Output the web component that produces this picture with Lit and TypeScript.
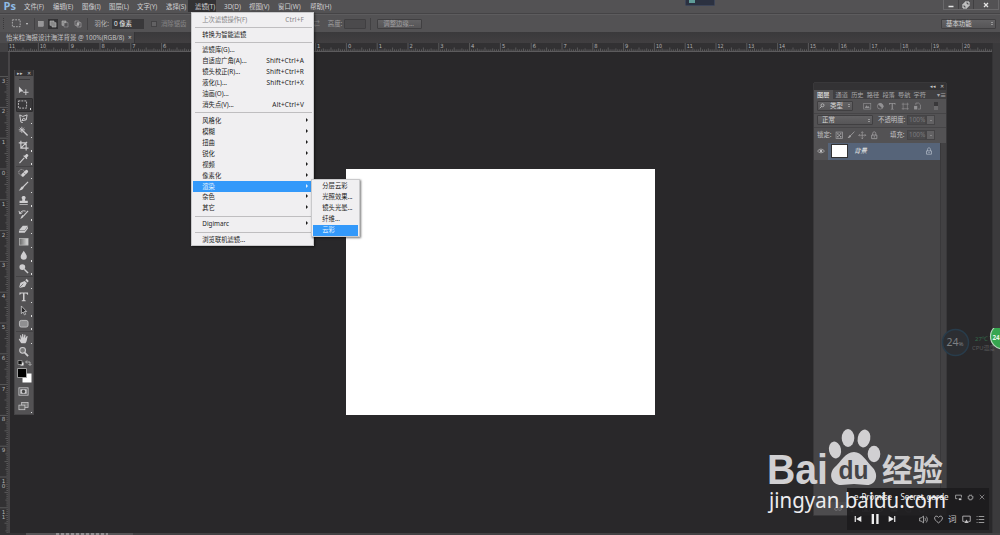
import { LitElement, html, svg, css } from "lit";
import { customElement, property } from "lit/decorators.js";

const UNIT = 30.8;

const ICONS: Record<string, unknown> = {
  move: svg`<path fill="currentColor" d="M1 1.5v7l2-1.8h3z"/><path stroke="currentColor" fill="none" d="M8.2 4.5v6M5.5 7.6h5.5"/>`,
  marquee: svg`<rect x="1.5" y="2" width="8.5" height="7.5" fill="none" stroke="currentColor" stroke-width=".9" stroke-dasharray="2 1.1"/>`,
  lasso: svg`<path fill="none" stroke="currentColor" d="M3 9.5 1.8 2 5 3.6 9.5 2 8.6 7.2 4 8 5.5 5.5 8 6.5M3 9.5l2 .5"/>`,
  wand: svg`<path stroke="currentColor" stroke-width="1.5" d="m5 5 5 5"/><path stroke="currentColor" stroke-width=".9" d="M4 .8v6.4M.8 4h6.4M1.8 1.8l4.4 4.4M6.2 1.8 1.8 6.2"/>`,
  crop: svg`<path fill="none" stroke="currentColor" stroke-width="1.2" d="M3 .8v7.7h8M.8 3h7.7v8M3 8.5 9.5 2"/>`,
  eyedrop: svg`<path stroke="currentColor" stroke-width="1.2" fill="none" d="M1.5 10.5 6.5 5"/><path fill="currentColor" d="m5.5 3 3.5 3.5.8-1-.6-.8 1.5-1.7c.5-1.1-.9-2.4-2-1.9L7 2.8l-.7-.5z"/>`,
  heal: svg`<path stroke="currentColor" stroke-width="3.2" stroke-linecap="round" d="M5 7.5 9 3.6"/><circle cx="3.8" cy="4.5" r="3" fill="none" stroke="currentColor" stroke-width=".7" stroke-dasharray="1.2 .7"/><path stroke="#535254" stroke-width=".6" d="m6 4.8 2 2"/>`,
  brush: svg`<path stroke="currentColor" stroke-width="1.2" d="M10.5 1 5 6.5"/><path fill="currentColor" d="M5.8 6.2C5.8 9 3 9.8.8 9.8c1.7-.7 1.6-3 3.3-4z"/>`,
  stamp: svg`<path fill="currentColor" d="M4.4 6c.5-1.7-.6-2-.6-3.2C3.8.4 8 .4 8 2.8 8 4 7 4.3 7.4 6h2.8v2.4H1.6V6zM1.6 9.3h8.6v1H1.6z"/>`,
  history: svg`<path stroke="currentColor" stroke-width="1.2" d="M10.5 2 6 7"/><path fill="currentColor" d="M6.3 6.5C6 9 4 10 2 10c1.5-.8 1-2.5 2.8-3.8z"/><path fill="none" stroke="currentColor" d="M2 5c.5-2.5 3-3.7 6-2.8M1 2l1 3.2 2.6-1.4"/>`,
  eraser: svg`<path fill="currentColor" d="M1 7.5 5 2.8h5.4L7 7.5zM1 8.2h6l3.4-4.6v2.2L7 10.3H1z"/>`,
  gradient: svg`<defs><linearGradient id="g"><stop stop-color="#666"/><stop offset="1" stop-color="#ddd"/></linearGradient></defs><rect x="1.5" y="2.5" width="9" height="7" fill="url(#g)" stroke="#b5b5b5" stroke-width=".8"/>`,
  blur: svg`<path fill="currentColor" d="M6 .8c1 2 3.2 4 3.2 6.2a3.2 3.2 0 0 1-6.4 0C2.8 4.800 5 2.800 6 .8z"/>`,
  dodge: svg`<circle cx="4.500" cy="4.300" r="3" fill="currentColor"/><path stroke="currentColor" stroke-width="1.500" d="m6.500 6.500 4 4"/>`,
  pen: svg`<path fill="currentColor" d="M1 10.500 2.500 5 7 3l2.200 2.200L7.200 9zM7.600 2.300 9 .8l2.200 2.200L10 4.600z"/><path stroke="#535254" stroke-width=".7" d="M1 10.500 5.500 6"/>`,
  type: svg`<path fill="currentColor" d="M1.500 1.500h9v2.300h-.8c-.2-1-.5-1.300-2.900-1.300v7l1.300.5v.6H3.900V10l1.300-.5v-7C2.800 2.500 2.500 2.800 2.300 3.800h-.8z"/>`,
  select: svg`<path fill="#29282a" stroke="currentColor" stroke-width=".8" d="M3.500 1v8l1.900-1.700 1.300 3 1.300-.6-1.300-2.900H9z"/>`,
  shape: svg`<rect x="1.500" y="2.500" width="9" height="7" rx="2" fill="#8f8f91" stroke="currentColor" stroke-width=".8"/>`,
  hand: svg`<path fill="currentColor" d="M3.500 10.800C2.500 9 1 7.500.8 6.200c.8-.4 1.600.2 2.200 1L2.200 2.800c.2-.7 1-.6 1.200 0l.8 2.500L4.300 1.500c.3-.7 1-.6 1.200 0l.3 3.600.9-3.300c.3-.6 1.100-.4 1.200.2L7.500 5.500 9 3.300c.5-.5 1.200 0 1 .7C9.200 6.300 9.500 9 7.800 10.800z"/>`,
  zoom: svg`<circle cx="4.800" cy="4.500" r="3" fill="#777" stroke="currentColor" stroke-width="1.100"/><path stroke="currentColor" stroke-width="1.800" d="m7 7 3.500 3.500"/>`,
  mask: svg`<rect x="1" y="2" width="10" height="8" fill="none" stroke="currentColor" stroke-width=".9"/><path fill="currentColor" d="M2.500 3.500h7v5h-7z"/><circle cx="6" cy="6" r="1.800" fill="#444"/>`,
  screen: svg`<rect x="4" y="1.500" width="7" height="5.500" fill="#777" stroke="currentColor" stroke-width=".8"/><rect x="1" y="4.500" width="6.500" height="5" fill="#666" stroke="currentColor" stroke-width=".8"/>`,
  solid: svg`<rect x="2" y="2" width="7.500" height="7.500" fill="#989799" stroke="#bbb" stroke-width=".6"/>`,
  union: svg`<path fill="#888" stroke="currentColor" stroke-width=".9" d="M1.500 1.500h6v2.500h3v6.500h-6V8h-3z"/>`,
  minus: svg`<path fill="#888" stroke="currentColor" stroke-width=".9" d="M1.500 1.500h6V4h-3v4h-3z"/><path fill="none" stroke="currentColor" stroke-width=".6" d="M7.500 4h3v6.500h-6V8"/>`,
  cross: svg`<path fill="none" stroke="currentColor" stroke-width=".8" d="M1.500 1.500h6v6.500h-6zM4.500 4h6v6.500h-6z"/><path fill="#aaa" d="M4.500 4h3v4h-3z"/>`,
  image: svg`<rect x="1" y="2" width="10" height="8" fill="none" stroke="currentColor" stroke-width=".9"/><path fill="currentColor" d="m2.500 8.500 2.300-4 1.700 2.200 1-1.200 2 3z"/>`,
  adjust: svg`<circle cx="6" cy="6" r="4" fill="none" stroke="currentColor"/><path fill="currentColor" d="M3 3a4.200 4.200 0 0 1 6 6z"/>`,
  frame: svg`<path fill="none" stroke="currentColor" stroke-width=".9" d="M3 1v10M9 1v10M1 3h10M1 9.500h10"/>`,
  smart: svg`<path fill="none" stroke="currentColor" d="M4 4V1.500h4l2.500 2.500v6H7"/><path fill="currentColor" d="M1.500 5.500H6v5H1.500z"/>`,
  checker: svg`<rect x="1.500" y="1.500" width="9" height="9" fill="none" stroke="currentColor"/><path fill="currentColor" d="M3 3h2v2H3zM7 3h2v2H7zM5 5h2v2H5zM3 7h2v2H3zM7 7h2v2H7z"/>`,
  arrows: svg`<path fill="none" stroke="currentColor" stroke-width=".9" d="M6 1v10M1 6h10M4.500 2.500 6 1l1.500 1.500M4.500 9.500 6 11l1.500-1.500M2.500 4.500 1 6l1.500 1.500M9.500 4.500 11 6 9.500 7.500"/>`,
  lock: svg`<path fill="none" stroke="currentColor" stroke-width="1.100" d="M3.800 6V3.500c0-3 4.400-3 4.400 0V6M2.300 5.800h7.400v5H2.300z"/><path fill="currentColor" d="M5.300 7.500h1.400V9H5.300z"/>`,
  eye: svg`<path fill="none" stroke="currentColor" d="M.8 6.200C3 2.200 9 2.200 11.200 6.200 9 9.500 3 9.500.8 6.200z"/><circle cx="6" cy="6" r="2" fill="currentColor"/>`,
  search: svg`<circle cx="7" cy="4.500" r="3" fill="none" stroke="currentColor" stroke-width="1.300"/><path stroke="currentColor" stroke-width="1.500" d="M4.800 6.800 1.500 10.500"/>`,
  prev: svg`<path fill="currentColor" d="M1 1.500h1.800v9H1zM11 1.500v9L3.200 6z"/>`,
  next: svg`<path fill="currentColor" d="M9.200 1.500H11v9H9.200zM1 1.500v9L8.800 6z"/>`,
  pause: svg`<path fill="currentColor" d="M2 0h2.800v12H2zM7.500 0h2.800v12H7.500z"/>`,
  volume: svg`<path fill="none" stroke="currentColor" d="M.8 4h2L6 1.500v9L2.800 8h-2zM7.800 3.800c1 1.400 1 3 0 4.400M9.600 2c2 2.400 2 5.600 0 8"/>`,
  heart: svg`<path fill="none" stroke="currentColor" stroke-width="1.100" d="M6 10.500C2.500 8 .8 6 .8 4 .8 1 4.500.8 6 3.200 7.500.8 11.200 1 11.200 4c0 2-1.700 4-5.200 6.500z"/>`,
  cast: svg`<path fill="none" stroke="currentColor" stroke-width="1.100" d="M3.500 8.500H1V1.500h10v7H8.500"/><path fill="currentColor" d="m6 6 3 4.500H3z"/>`,
  list: svg`<path stroke="currentColor" d="M3.500 2H11M3.500 6H11M3.500 10H11M.8 2h1.300M.8 6h1.300M.8 10h1.300"/>`,
  mini: svg`<path fill="none" stroke="currentColor" stroke-width="1.200" d="M4 8H1V2h10v4"/><path fill="currentColor" d="M6.500 7.500h4.500v3H6.500z"/>`,
  gear: svg`<circle cx="6" cy="6" r="3.600" fill="none" stroke="currentColor" stroke-width="1.200"/><circle cx="6" cy="6" r="4.800" fill="none" stroke="currentColor" stroke-width=".9" stroke-dasharray="1.600 2.170"/>`,
  close: svg`<path stroke="currentColor" stroke-width="1.100" d="m1.500 1.500 9 9M10.500 1.500l-9 9"/>`,
  link: svg`<path fill="none" stroke="currentColor" d="M5 4H3a2 2 0 0 0 0 4h2M7 4h2a2 2 0 0 1 0 4H7M4 6h4"/>`,
  folder: svg`<path fill="currentColor" d="M1 2.500h4l1 1.200h5v6H1z"/>`,
  page: svg`<path fill="none" stroke="currentColor" d="M2 1.500h8v9H5l-3-3z"/>`,
  trash: svg`<path fill="none" stroke="currentColor" d="M2 3h8M3 3v7.500h6V3M5 1.500h2"/>`,
};

const icon = (name: string, size = 10) =>
  html`<svg class="ico" width=${size} height=${size} viewBox="0 0 12 12">${ICONS[name]}</svg>`;

@customElement("ps-ruler")
class PsRuler extends LitElement {
  @property({ type: Boolean }) vertical = false;

  static styles = css`
    :host { display: block; background: #323133; }
    svg { display: block; }
    text { font: 5.6px "DejaVu Sans", sans-serif; fill: #b3b2b4; }
  `;

  render() {
    const v = this.vertical;
    const origin = v ? 117 : 338.4;
    const len = v ? 482 : 984;
    const first = v ? -3 : -10.99;
    const ticks: string[] = [];
    for (let i = Math.ceil(first * 16); ; i++) {
      const p = origin + (i * UNIT) / 16;
      if (p > len) break;
      if (p < 0) continue;
      const h = i % 16 === 0 ? 8 : i % 8 === 0 ? 3.5 : i % 4 === 0 ? 2.6 : 1.6;
      ticks.push(v ? `M8 ${p.toFixed(1)}h${-h}` : `M${p.toFixed(1)} 8v${-h}`);
    }
    const labels: { n: number; p: number }[] = [];
    for (let n = v ? -3 : -11; origin + n * UNIT < len; n++) labels.push({ n: Math.abs(n), p: origin + n * UNIT });
    return html`<svg width=${v ? 10 : len} height=${v ? len : 9}>
      <path d=${ticks.join("")} stroke="#6b6a6c" stroke-width=".7" fill="none"/>
      ${labels.map(({ n, p }) =>
        v
          ? String(n).split("").map((d, k) => svg`<text x="1.800" y=${p + 6 + k * 5}>${d}</text>`)
          : svg`<text x=${p + 1.5} y="5.200" textLength=${n > 9 ? 6 : 3.3} lengthAdjust="spacingAndGlyphs">${n}</text>`
      )}
      ${v ? svg`<path d="M9 0V482" stroke="#5c5b5d"/>` : svg`<path d="M0 8.500H984" stroke="#5c5b5d"/>`}
    </svg>`;
  }
}

@customElement("ps-menu")
class PsMenu extends LitElement {
  @property({ attribute: false }) items: any[] = [];

  static styles = css`
    :host { display: block; box-sizing: border-box; background: #f0eff1; color: #1c1c1c; border: 1px solid #c9c9cb; box-shadow: 1px 1px 2px #0008; font: 6.3px "Noto Sans", "Noto Sans CJK SC", sans-serif; }
    .row { display: flex; align-items: center; height: 10.95px; padding: 0 8px 0 9.3px; margin: 0 1px; white-space: nowrap; line-height: 10px; }
    .row.off { color: #858486; }
    .row.on { background: #3399fa; color: #e4f2ff; padding-right: 4px; }
    .row.sub { padding-right: 4px; }
    .name { flex: 1; }
    .key { letter-spacing: .13px; font-size: 6.5px; }
    .sep { height: 1px; margin: 2px 1px 2px 3px; background: #bfbec0; }
    .sep.tight { margin: 1.7px 1px 1.7px 3px; }
    .arrow { border-left: 2.5px solid currentColor; border-top: 2px solid transparent; border-bottom: 2px solid transparent; margin-bottom: 2px; }
  `;

  render() {
    return this.items.map((i, n) =>
      i === null
        ? html`<div class="sep ${n < 4 ? "tight" : ""}"></div>`
        : html`<div class="row ${i.state ?? ""} ${i.sub ? "sub" : ""}"><span class="name">${i.name}</span>${
            i.key ? html`<span class="key">${i.key}</span>` : ""
          }${i.sub ? html`<span class="arrow"></span>` : ""}</div>`
    );
  }
}

const FILTER_MENU = [
  { name: "上次滤镜操作(F)", key: "Ctrl+F", state: "off" },
  null,
  { name: "转换为智能滤镜" },
  null,
  { name: "滤镜库(G)..." },
  { name: "自适应广角(A)...", key: "Shift+Ctrl+A" },
  { name: "镜头校正(R)...", key: "Shift+Ctrl+R" },
  { name: "液化(L)...", key: "Shift+Ctrl+X" },
  { name: "油画(O)..." },
  { name: "消失点(V)...", key: "Alt+Ctrl+V" },
  null,
  ...["风格化", "模糊", "扭曲", "锐化", "视频", "像素化"].map((name) => ({ name, sub: true })),
  { name: "渲染", sub: true, state: "on" },
  { name: "杂色", sub: true },
  { name: "其它", sub: true },
  null,
  { name: "Digimarc", sub: true },
  null,
  { name: "浏览联机滤镜..." },
];
const RENDER_MENU = [
  { name: "分层云彩" },
  { name: "光照效果..." },
  { name: "镜头光晕..." },
  { name: "纤维..." },
  { name: "云彩", state: "on" },
];
const MENUS = ["文件(F)", "编辑(E)", "图像(I)", "图层(L)", "文字(Y)", "选择(S)", "滤镜(T)", "3D(D)", "视图(V)", "窗口(W)", "帮助(H)"];
const TOOLS = ["move", "marquee", "lasso", "wand", "crop", "eyedrop", "heal", "brush", "stamp", "history", "eraser", "gradient", "blur", "dodge", "pen", "type", "select", "shape", "hand", "zoom"];

@customElement("app-root")
class AppRoot extends LitElement {
  static styles = css`
    :host { display: block; position: relative; width: 1000px; height: 535px; overflow: hidden; background: #29282a; color: #d2d1d3; font: 6.4px "Noto Sans", "Noto Sans CJK SC", sans-serif; line-height: 10px; white-space: nowrap; }
    * { box-sizing: border-box; }
    .ico { display: block; flex: none; }
    .frame { display: flex; flex-direction: column; height: 535px; }
    .menubar { display: flex; height: 14px; background: #535254; border-bottom: 1px solid #454446; }
    .logo { width: 20px; padding: 0 0 0 3.500px; font: bold 11px/12px "Open Sans", sans-serif; color: #8fbbe4; }
    .menus { display: grid; grid-template-columns: 29px 29px 27px 28px 29px 29px 29px 25px 29px 32px 30px; flex: 1; }
    .menus span { height: 12px; line-height: 12px; padding: 1px 0 0 4px; }
    .menus .active { background: #333234; margin-right: 4px; }
    .menus .active { margin-left: -3px; padding-left: 7px; }
    .window { display: flex; height: 10px; margin-right: 1px; border: 1px solid #69686a; border-top: 0; color: #e4e4e4; }
    .window span { width: 15px; display: grid; place-items: center; border-right: 1px solid #403f41; }
    .window span:last-child { width: 24px; border: 0; }
    .options { display: flex; align-items: center; height: 18px; background: #535254; border-top: 1px solid #5d5c5e; color: #b9b8ba; }
    .grip { width: 1px; height: 11px; margin-left: 3px; border-left: 1px dotted #39383a; }
    .options .marq { margin-left: 7px; }
    .caret { border-top: 2px solid #d4d4d4; border-left: 1.500px solid transparent; border-right: 1.500px solid transparent; margin-left: 4px; }
    .rule { width: 1px; height: 12px; background: #424143; }
    .modes { display: flex; gap: 2.800px; margin-left: 1px; }
    .modes div { height: 10px; display: grid; place-items: center; width: 9.500px; }
    .modes .on { background: #333234; }
    .field { width: 32px; height: 10px; margin-left: 3px; padding-left: 2px; background: #39383a; color: #efefef; }
    .box { width: 6px; height: 6px; margin-left: 7px; background: #626163; border: 1px solid #444345; }
    .dim { color: #858486; }
    .btn { height: 10px; background: linear-gradient(#636264, #565557); border: 1px solid #403f41; line-height: 8px; border-radius: 1px; }
    .tabs { display: flex; height: 11px; background: linear-gradient(#3a393b, #413f41); }
    .tab { width: 135px; background: #4c4b4d; color: #c3c2c4; padding: 1px 0 0 6px; border-right: 1px solid #353436; display: flex; }
    .body { display: grid; grid-template-columns: 10px 982px 8px; flex: 1; min-height: 0; }
    .hruler { display: grid; grid-template-columns: 8px 984px 8px; height: 9px; }
    .corner { background: #434244; }
    .scroll { background: #3b3a3c; border-left: 1px solid #343335; }
    .status { height: 2px; background: linear-gradient(90deg, #343335 26px, #555456 26px 133px, #424143 133px); padding-left: 56px; }
    .status div { width: 52px; height: 2px; background: repeating-linear-gradient(90deg, #8f8e90 0 3px, #5a595b 3px 5px); }
    .document { position: absolute; left: 346px; top: 169px; width: 308.500px; height: 246px; background: #fff; }
    .filter { position: absolute; left: 191px; top: 12px; width: 123px; height: 234px; padding-top: 1.200px; }
    .render { position: absolute; left: 311px; top: 179px; width: 49px; height: 58px; padding-top: .9px; }

    .toolbox { position: absolute; left: 14px; top: 70px; width: 20px; height: 345px; background: #535254; border: 1px solid #454446; border-top: 0; color: #cfced0; display: flex; flex-direction: column; align-items: center; }
    .head { align-self: stretch; height: 6px; background: #333234; color: #ccc; display: flex; justify-content: flex-end; align-items: center; gap: 4px; padding-right: 2px; font-size: 5px; line-height: 5px; flex: none; }
    .handle { width: 11px; height: 1px; background: #39383a; margin: 3px 0 4px; flex: none; }
    .tool { height: 13.750px; width: 17px; display: grid; grid-template-columns: 12.500px 2px; justify-content: end; align-items: center; flex: none; }
    .tool.on { background: #39383a; border: 1px solid #2e2d2f; border-radius: 1px; }
    .tool i { width: 1.300px; height: 1.300px; background: #ddd; align-self: end; margin-bottom: 1px; }
    .ends { border-bottom: 1px solid #444345; }
    .low { height: 15px; }

    .panel { position: absolute; left: 813px; top: 82px; width: 134px; height: 434px; background: #535254; border: 1px solid #39383a; border-radius: 2px 2px 0 0; display: flex; flex-direction: column; }
    .panel .head { height: 7px; }
    .ptabs { display: flex; height: 9px; background: #403f41; color: #a7a6a8; font-size: 6.200px; line-height: 9px; gap: 3.100px; }
    .ptabs span { width: 12.500px; }
    .ptabs .cur { width: 18.500px; background: #535254; color: #f0f0f0; padding-left: 3px; }
    .ptabs .more { margin-left: auto; width: 9px; }
    .prow { display: flex; align-items: center; height: 14.500px; padding: 0 3px; border-bottom: 1px solid #464547; color: #c4c3c5; flex: none; }
    .sel { display: flex; align-items: center; justify-content: space-between; padding: 0 2px 0 4px; color: #d4d4d4; }
    .updown { display: flex; flex-direction: column; gap: 1px; }
    .updown::before, .updown::after { content: ""; border: 1.500px solid transparent; border-top: 0; border-bottom: 1.800px solid #d2d2d2; }
    .updown::after { border-bottom: 0; border-top: 1.800px solid #d2d2d2; }
    .pct { height: 10px; width: 19px; background: #4b4a4c; border: 1px solid #454446; color: #7b7a7c; line-height: 8px; padding-left: 1px; }
    .drop { height: 10px; width: 9px; display: grid; place-items: center; background: #626163; border: 1px solid #454446; }
    .drop::after { content: ""; border-top: 1.800px solid #aaa; border-left: 1.500px solid transparent; border-right: 1.500px solid transparent; }
    .filters { display: flex; gap: 4px; margin-left: 10px; color: #929193; }
    .layers { flex: 1; display: grid; grid-template-columns: 126px 1fr; background: #464547; }
    .layer { height: 17px; display: flex; align-items: center; background: #535254; color: #e4e4e4; }
    .layer .vis { width: 14px; padding-left: 3px; color: #bdbcbe; }
    .layer .bar { flex: 1; height: 17px; background: #566479; display: flex; align-items: center; padding: 0 7px 0 3px; font-style: italic; }
    .bar .ico { color: #b4bcc8; }
    .thumb { width: 17px; height: 14px; background: #fff; border: 1px solid #333; margin-right: 6px; }
    .track { border-left: 1px solid #39383a; background: #424143; }
    .foot { height: 13px; display: flex; justify-content: center; align-items: center; gap: 6px; background: #4d4c4e; color: #858486; }

    .gauge { position: absolute; left: 941px; top: 328px; }
    .widget { position: absolute; left: 685px; top: 0; width: 30px; height: 6px; background: #2b3140; border: 1px solid #3c4457; border-top: 0; border-radius: 0 0 2px 2px; padding: 0 3px; }
    .widget div { width: 6px; height: 3px; background: #5f9c98; }
    .mark { position: absolute; left: 760px; top: 422px; }
    .player { position: absolute; left: 847px; top: 488px; width: 142px; height: 42px; background: #1b1a1ce0; color: #c9c8ca; display: flex; flex-direction: column; justify-content: space-between; padding: 4px 4px 6px 7px; }
    .line { display: flex; align-items: center; height: 10px; }
    .title { flex: 1; font: 8px/10px "Noto Sans", sans-serif; color: #eee; word-spacing: .8px; }
    .line .tiny { margin-left: 5px; }
    .ctl { display: flex; align-items: center; color: #eee; gap: 8px; flex: 1; }
    .more2 { display: flex; gap: 5.300px; align-items: center; font-size: 8.500px; color: #c2c1c3; }
  `;

  renderMark() {
    return html`<svg class="mark" width="200" height="100" viewBox="760 422 200 100">
      <g fill="#d1d0d2">
        <text x="767" y="483.500" textLength="61" lengthAdjust="spacingAndGlyphs" font-family="Liberation Sans" font-weight="700" font-size="42">Bai</text>
        <ellipse cx="835" cy="450" rx="6" ry="8.500" transform="rotate(-12 835 450)"/>
        <ellipse cx="848" cy="438" rx="6.300" ry="9"/>
        <ellipse cx="864" cy="438.500" rx="6.300" ry="9" transform="rotate(12 864 438.500)"/>
        <ellipse cx="874" cy="454" rx="6.300" ry="8.300"/>
        <path d="M854 452c8 0 12 9 19 16 6 7 3 17-6 17-5 0-8-1-13-1s-8 1-13 1c-9 0-13-10-7-17 7-6 11-16 20-16z"/>
        <text x="882" y="480.500" textLength="61" lengthAdjust="spacingAndGlyphs" font-family="Noto Sans CJK SC" font-weight="700" font-size="31">经验</text>
        <text x="769" y="507.500" textLength="177" lengthAdjust="spacingAndGlyphs" font-family="Noto Sans" font-size="22.500" fill="#eeedef">jingyan.baidu.com</text>
      </g>
      <text x="838.500" y="479" textLength="30" lengthAdjust="spacingAndGlyphs" font-family="Liberation Sans" font-weight="700" font-size="26" fill="#454446">du</text>
    </svg>`;
  }

  render() {
    return html`
      <div class="frame">
        <div class="menubar">
          <div class="logo">Ps</div>
          <div class="menus">${MENUS.map((m) => html`<span class=${m.startsWith("滤镜") ? "active" : ""}>${m}</span>`)}</div>
          <div class="window">
            <span><svg class="ico" width="7" height="6"><path d="M.5 4.500h5" stroke="currentColor" stroke-width="1.500"/></svg></span>
            <span><svg class="ico" width="8" height="8"><path d="M3 1h4v4H3zM1 3h4v4H1z" fill="none" stroke="currentColor"/></svg></span>
            <span><svg class="ico" width="6" height="6"><path d="m1 1 4 4M5 1 1 5" stroke="currentColor" stroke-width="1.300"/></svg></span>
          </div>
        </div>
        <div class="options">
          <div class="grip"></div>
          <div class="marq">${icon("marquee", 11)}</div>
          <div class="caret"></div>
          <div class="rule" style="margin-left:6px"></div>
          <div class="modes">
            ${["solid", "union", "minus", "cross"].map((m) => html`<div class=${m === "union" ? "on" : ""}>${icon(m, 8)}</div>`)}
          </div>
          <div class="rule" style="margin-left:5px"></div>
          <span style="margin-left:6px">羽化:</span>
          <div class="field">0 像素</div>
          <div class="box"></div>
          <span class="dim" style="margin-left:4px">消除锯齿</span>
          <span class="dim" style="margin-left:127px">⇄</span>
          <span style="margin-left:8px;color:#a2a1a3">高度:</span>
          <div class="btn" style="width:22px;margin-left:2px;background:#4b4a4c"></div>
          <div class="rule" style="margin-left:4px"></div>
          <div class="btn" style="width:45px;margin-left:6px;padding-left:5px;color:#a2a1a3">调整边缘...</div>
          <div class="btn sel" style="width:55px;margin-left:auto;margin-right:4px">基本功能<span class="updown"></span></div>
        </div>
        <div class="tabs"><div class="tab"><span style="width:122px">怡米粒海报设计海洋背景 @ 100%(RGB/8)</span><span>×</span></div></div>
        <div class="hruler"><div class="corner"></div><ps-ruler></ps-ruler><div class="scroll"></div></div>
        <div class="body"><ps-ruler vertical></ps-ruler><div></div><div class="scroll"></div></div>
        <div class="status"><div></div></div>
      </div>

      <div class="document"></div>

      <div class="toolbox">
        <div class="head"><span>▸▸</span><span>✕</span></div>
        <div class="handle"></div>
        ${TOOLS.map(
          (t, i) => html`<div class="tool ${t === "marquee" ? "on" : ""} ${[5, 13, 17].includes(i) ? "ends" : ""}">${icon(t, 11.5)}${t === "move" || t === "zoom" ? "" : html`<i></i>`}</div>`
        )}
        <svg class="ico" width="18" height="25">
          <path d="M5.500 3.500h3v3h-3z" fill="#fff"/><path d="M3 1.500h4v4H3z" fill="#111" stroke="#aaa" stroke-width=".7"/>
          <path d="M11 3h4v3M12 1.500 10.500 3 12 4.500M13.500 5 15 6.500 16.500 5" fill="none" stroke="#bbb" stroke-width=".8"/>
          <path d="M7.500 14.500h9v9h-9z" fill="#fff"/><path d="M2.500 9.500h9v9h-9z" fill="#000" stroke="#aaa" stroke-width=".9"/>
        </svg>
        <div class="tool low">${icon("mask", 11)}</div>
        <div class="tool low">${icon("screen", 11)}<i></i></div>
      </div>

      <div class="panel">
        <div class="head"><span>◂◂</span><span>✕</span></div>
        <div class="ptabs"><span class="cur">图层</span>${["通道", "历史", "路径", "段落", "导航", "字符"].map((t) => html`<span>${t}</span>`)}<span class="more">▾≡</span></div>
        <div class="prow">
          <div class="btn sel" style="width:36px;padding-left:1px">${icon("search", 6)}<span>类型</span><span class="updown"></span></div>
          <div class="filters">${["image", "adjust", "type", "frame", "smart"].map((n) => icon(n, 8.5))}</div>
          <div style="width:4px;height:8px;background:linear-gradient(#39383a 50%,#6b6a6c 50%);margin-left:12px"></div>
        </div>
        <div class="prow">
          <div class="btn sel" style="width:56px">正常<span class="updown"></span></div>
          <span style="margin-left:5px;width:29px">不透明度:</span><div class="pct">100%</div><div class="drop"></div>
        </div>
        <div class="prow" style="border:0">
          <span style="width:18px">锁定:</span>
          <div class="filters" style="margin:0;gap:3px;color:#a5a4a6">${["checker", "brush", "arrows", "lock"].map((n) => icon(n, 8.5))}</div>
          <span style="margin-left:12px;width:17px">填充:</span><div class="pct">100%</div><div class="drop"></div>
        </div>
        <div class="layers">
          <div>
            <div class="layer"><div class="vis">${icon("eye", 8)}</div><div class="bar"><div class="thumb"></div><span style="flex:1">背景</span>${icon("lock", 8)}</div></div>
          </div>
          <div class="track"></div>
        </div>
        <div class="foot">${["link", "type", "image", "adjust", "folder", "page", "trash"].map((n) => icon(n, 8))}</div>
      </div>

      <div class="player">
        <div class="line"><span class="title">e Promise - Secret garde</span><span class="tiny">${icon("mini", 7)}</span><span class="tiny">${icon("gear", 7)}</span><span class="tiny">${icon("close", 6)}</span></div>
        <div class="line"><div class="ctl">${icon("prev", 8)}${icon("pause", 10)}${icon("next", 8)}</div><div class="more2">${icon("volume", 9)}${icon("heart", 9)}<span>词</span>${icon("cast", 9)}${icon("list", 9)}</div></div>
      </div>

      ${this.renderMark()}

      <svg class="gauge" width="59" height="30">
        <circle cx="14.500" cy="14.500" r="13" fill="#2c2e32" stroke="#283c4b" stroke-width="1.500"/>
        <text x="5.500" y="18" font-size="10.500" fill="#7e8083">24<tspan font-size="6">%</tspan></text>
        <text x="34" y="13" font-size="6" fill="#346a4a">27℃</text>
        <text x="31" y="21.500" font-size="5.800" fill="#5a595b">CPU温度</text>
        <circle cx="62" cy="8.500" r="12.500" fill="#36a64f" stroke="#b7d9bd" stroke-width="1.200"/>
        <text x="51.500" y="11.500" font-size="7" font-weight="700" fill="#e8f6e9" textLength="7.200" lengthAdjust="spacingAndGlyphs">24</text>
      </svg>
      <div class="widget"><div></div></div>

      <ps-menu class="filter" .items=${FILTER_MENU}></ps-menu>
      <ps-menu class="render" .items=${RENDER_MENU}></ps-menu>
    `;
  }
}
